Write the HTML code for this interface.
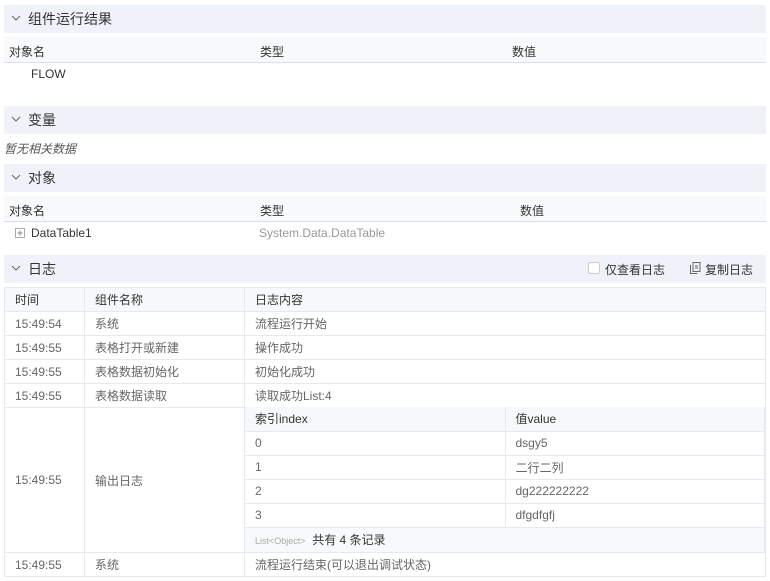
<!DOCTYPE html>
<html><head><meta charset="utf-8"><style>
*{box-sizing:border-box;margin:0;padding:0}
body{width:770px;height:581px;background:#fff;font-family:"Liberation Sans","Noto Sans CJK SC",sans-serif;font-size:12px;color:#333;position:relative;overflow:hidden}
.a{position:absolute;white-space:nowrap}
.sh{position:absolute;left:4px;width:762px;height:28px;background:#eff3f9;font-size:14px;line-height:28px;padding-left:24px;color:#333}
.sh svg{position:absolute;left:7px;top:10px}
.th{position:absolute;left:4px;width:762px;height:26px;background:#f8f9fa;border-bottom:1px solid #dcdfe6}
table{position:absolute;border-collapse:collapse;font-size:12px}
td{border:1px solid #e6e9ef;padding:0 0 0 10px;height:24px;color:#666;vertical-align:middle}
.hd td{background:#f7f8fa;color:#333}
</style></head><body>
<div class="sh" style="top:5px"><svg width="10" height="7" viewBox="0 0 10 7"><path d="M1 1l4 4 4-4" fill="none" stroke="#666" stroke-width="1"/></svg>组件运行结果</div>
<div class="th" style="top:37px"></div>
<div class="a" style="left:9px;top:43px">对象名</div><div class="a" style="left:260px;top:43px">类型</div><div class="a" style="left:512px;top:43px">数值</div>
<div class="a" style="left:31px;top:67px">FLOW</div>
<div class="sh" style="top:106px"><svg width="10" height="7" viewBox="0 0 10 7"><path d="M1 1l4 4 4-4" fill="none" stroke="#666" stroke-width="1"/></svg>变量</div>
<div class="a" style="left:4px;top:140px;font-style:italic;color:#555">暂无相关数据</div>
<div class="sh" style="top:164px"><svg width="10" height="7" viewBox="0 0 10 7"><path d="M1 1l4 4 4-4" fill="none" stroke="#666" stroke-width="1"/></svg>对象</div>
<div class="th" style="top:196px"></div>
<div class="a" style="left:9px;top:202px">对象名</div><div class="a" style="left:260px;top:202px">类型</div><div class="a" style="left:520px;top:202px">数值</div>
<svg class="a" style="left:15px;top:228px" width="10" height="10"><rect x="0.5" y="0.5" width="9" height="9" fill="none" stroke="#aaa"/><path d="M2.5 5h5M5 2.5v5" stroke="#888"/></svg>
<div class="a" style="left:31px;top:226px">DataTable1</div>
<div class="a" style="left:259px;top:226px;color:#999">System.Data.DataTable</div>
<div class="sh" style="top:255px"><svg width="10" height="7" viewBox="0 0 10 7"><path d="M1 1l4 4 4-4" fill="none" stroke="#666" stroke-width="1"/></svg>日志</div>
<div class="a" style="left:588px;top:262px;width:12px;height:12px;border:1px solid #ccc;border-radius:2px;background:#fff"></div>
<div class="a" style="left:605px;top:261px">仅查看日志</div>
<svg class="a" style="left:690px;top:262px" width="11" height="12"><rect x="3" y="0.5" width="7" height="9" fill="none" stroke="#666"/><path d="M0.5 3v8.5h7" fill="none" stroke="#666"/><path d="M5 4h3M5 6h3" stroke="#666"/></svg>
<div class="a" style="left:705px;top:261px">复制日志</div>
<table style="left:4px;top:287px;width:762px">
<tr class="hd"><td style="width:80px">时间</td><td style="width:160px">组件名称</td><td>日志内容</td></tr>
<tr><td>15:49:54</td><td>系统</td><td>流程运行开始</td></tr>
<tr><td>15:49:55</td><td>表格打开或新建</td><td>操作成功</td></tr>
<tr><td>15:49:55</td><td>表格数据初始化</td><td>初始化成功</td></tr>
<tr><td>15:49:55</td><td>表格数据读取</td><td>读取成功List:4</td></tr>
<tr><td style="height:145px">15:49:55</td><td>输出日志</td><td style="padding:0"></td></tr>
<tr><td>15:49:55</td><td>系统</td><td>流程运行结束(可以退出调试状态)</td></tr>
</table>
<table style="left:245px;top:407px;width:520px">
<tr class="hd"><td style="width:260px;border-top:0;border-left:0">索引index</td><td style="border-top:0">值value</td></tr>
<tr><td style="border-left:0">0</td><td>dsgy5</td></tr>
<tr><td style="border-left:0">1</td><td>二行二列</td></tr>
<tr><td style="border-left:0">2</td><td>dg222222222</td></tr>
<tr><td style="border-left:0">3</td><td>dfgdfgfj</td></tr>
<tr><td colspan="2" style="height:25px;background:#f8f9fa;border-left:0;border-bottom:0;color:#333"><span style="font-size:9px;color:#aaa">List&lt;Object&gt;</span>&nbsp; 共有 4 条记录</td></tr>
</table>
</body></html>
